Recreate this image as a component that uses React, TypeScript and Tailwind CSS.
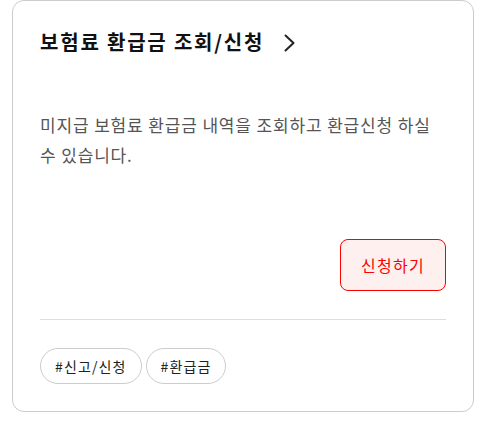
export default function App() {
  const tags = ['#신고/신청', '#환급금'];

  return (
    <main
      className="min-h-screen bg-white pl-3"
      style={{ fontFamily: '"Noto Sans CJK KR", "Noto Sans", sans-serif' }}
    >
      <div className="flex h-[412px] w-[462px] flex-col rounded-xl border border-[#cccccc] px-[27px] pt-[27px] pb-[27px]">
        <a href="#" className="flex h-7 items-center gap-5 text-[20px] font-bold tracking-[0.09em] text-[#111111]">
          <span>보험료 환급금 조회/신청</span>
          <svg width="12" height="18" viewBox="0 0 12 18" fill="none" className="mt-[1px]">
            <path d="M1.5 1.5L9.5 9L1.5 16.5" stroke="#222222" strokeWidth="2" strokeLinecap="round" strokeLinejoin="round" />
          </svg>
        </a>

        {/* 설명 */}
        <p className="mt-[54px] text-[17px] leading-[30px] tracking-[0.05em] text-[#555555]">
          미지급 보험료 환급금 내역을 조회하고 환급신청 하실 수 있습니다.
        </p>

        <div className="mt-auto flex justify-end">
          <button className="h-[52px] rounded-lg border border-[#ff0000] bg-[#fff0f0] px-5 text-[16px] tracking-[0.08em] text-[#ff0000]">
            신청하기
          </button>
        </div>

        <hr className="mt-7 border-t border-[#dddddd]" />

        <div className="mt-7 flex gap-1">
          {tags.map((t) => (
            <span
              key={t}
              className="flex h-9 items-center rounded-full border border-[#cccccc] px-[14px] text-[14px] tracking-[0.08em] text-[#222222]"
            >
              {t}
            </span>
          ))}
        </div>
      </div>
    </main>
  );
}
